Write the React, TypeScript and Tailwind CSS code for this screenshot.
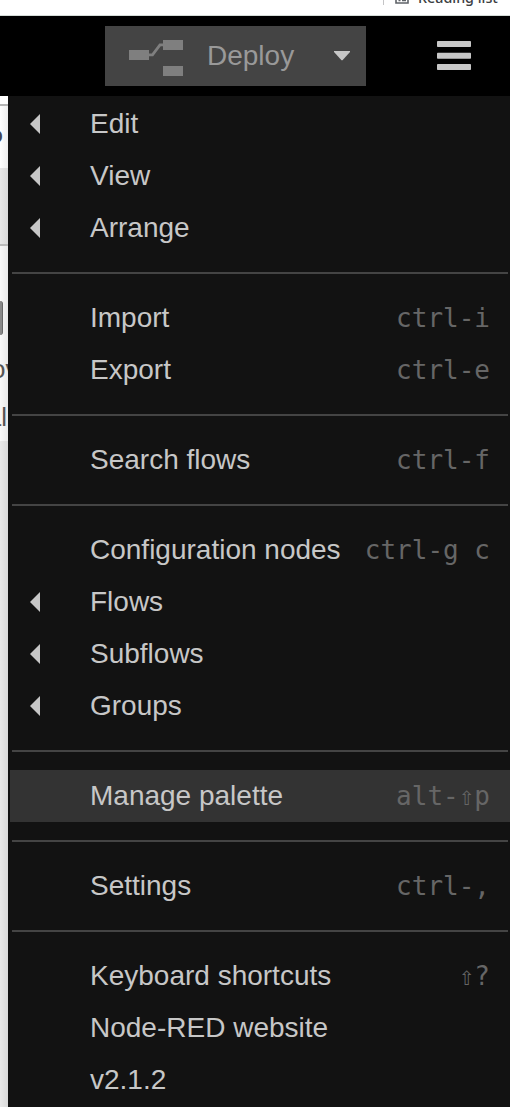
import React from "react";

type Entry = { label: string; keys?: string; sub?: boolean; active?: boolean };

const groups: Entry[][] = [
  [
    { label: "Edit", sub: true },
    { label: "View", sub: true },
    { label: "Arrange", sub: true },
  ],
  [
    { label: "Import", keys: "ctrl-i" },
    { label: "Export", keys: "ctrl-e" },
  ],
  [{ label: "Search flows", keys: "ctrl-f" }],
  [
    { label: "Configuration nodes", keys: "ctrl-g c" },
    { label: "Flows", sub: true },
    { label: "Subflows", sub: true },
    { label: "Groups", sub: true },
  ],
  [{ label: "Manage palette", keys: "alt-⇧p", active: true }],
  [{ label: "Settings", keys: "ctrl-," }],
  [
    { label: "Keyboard shortcuts", keys: "⇧?" },
    { label: "Node-RED website" },
    { label: "v2.1.2" },
  ],
];

function MenuRow({ label, keys, sub, active }: Entry) {
  return (
    <li
      className={`flex h-[52px] shrink-0 items-center pr-5 pl-5 ${active ? "bg-[#333333]" : ""}`}
    >
      <span className="w-[60px] shrink-0">
        {sub && (
          <svg width="10" height="20" viewBox="0 0 10 20" className="block">
            <path d="M10 0V20L0 10Z" fill="#c7c7c7" />
          </svg>
        )}
      </span>
      <span className="grow text-[28px] leading-[40px] whitespace-nowrap text-[#c7c7c7]">{label}</span>
      {keys && (
        <span className="font-['DejaVu_Sans_Mono',monospace] text-[26px] leading-[40px] whitespace-pre text-[#666666]">
          {keys}
        </span>
      )}
    </li>
  );
}

function BrowserBar() {
  return (
    <div className="flex h-4 shrink-0 items-end justify-end overflow-hidden border-b border-[#d5dcd8] bg-white">
      <div className="flex h-[15px] w-[127px] items-start">
        <span className="h-[5px] w-px bg-[#c4c4c6]" />
        <svg width="14" height="4" viewBox="0 0 14 4" className="ml-[11px] block">
          <path d="M1 0V3H13V0M3.500 .5H5.500M7 .5H11" fill="none" stroke="#5f6368" strokeWidth="1.600" />
        </svg>
        <span className="-mt-[13px] ml-[9px] font-['Noto_Sans',sans-serif] text-[14.300px] leading-[21px] font-medium whitespace-nowrap text-[#3c4043]">
          Reading list
        </span>
      </div>
    </div>
  );
}

function Header() {
  return (
    <header className="flex h-20 shrink-0 bg-black pt-[10px] pl-[105px]">
      <button className="flex h-[60px] w-[261px] items-center bg-[#444444] pl-6">
        <svg width="54" height="36" viewBox="0 0 54 36" className="mt-1 block shrink-0">
          <path d="M20 14.800H23.500L31 4.800H34" fill="none" stroke="#7f7f7f" strokeWidth="2.800" />
          <path d="M0 10H20V20H0ZM34 0H54V10H34ZM34 26H54V36H34Z" fill="#7f7f7f" />
        </svg>
        <span className="ml-6 w-[127px] text-left text-[28px] leading-[40px] text-[#999999]">Deploy</span>
        <svg width="16" height="10" viewBox="0 0 16 10" className="block shrink-0">
          <path d="M0 0H16V1L8.500 9.300H7.500L0 1Z" fill="#c7c7c7" />
        </svg>
      </button>
      <svg width="34" height="29" viewBox="0 0 34 29" className="mt-[15px] ml-[71px] block shrink-0">
        <rect y="0" width="34" height="6" rx=".8" fill="#c7c7c7" />
        <rect y="11.700" width="34" height="6" rx=".8" fill="#c7c7c7" />
        <rect y="23" width="34" height="6" rx=".8" fill="#c7c7c7" />
      </svg>
    </header>
  );
}

function Workspace() {
  return (
    <aside className="flex w-2 shrink-0 flex-col overflow-hidden bg-linear-to-r from-[#e9e9e9] to-[#d9d9d9]">
      <div className="h-[10px] shrink-0 border-b-2 border-[#b5b5b5] bg-white" />
      <div className="flex h-[62px] shrink-0 items-center justify-end bg-linear-to-r from-white to-[#eeeeee] pr-[5px] pb-1 text-[24px] font-bold text-[#444455]">
        o
      </div>
      <div className="h-[78px] shrink-0 border-b-2 border-[#bbbbbb] bg-linear-to-r from-[#e8e8e8] to-[#d9d9d9]" />
      <div className="flex h-[195px] shrink-0 flex-col bg-linear-to-r from-[#f8f8f8] to-[#e8e8e8] text-[26px] leading-[48px] whitespace-nowrap text-[#555555]">
        <span className="mt-[55px] h-[34px] w-[3px] shrink-0 rounded-r-[3px] border-r border-[#666666] bg-[#888888]" />
        <span className="mt-[10px] -ml-[9px] h-12 shrink-0">ov</span>
        <span className="flex h-12 shrink-0 justify-end pr-px">al</span>
      </div>
    </aside>
  );
}

export default function App() {
  return (
    <div className="flex h-[1107px] w-[510px] flex-col overflow-hidden bg-white font-['Liberation_Sans',Arial,sans-serif]">
      <BrowserBar />
      <Header />
      <div className="flex min-h-0 grow">
        <Workspace />
        <nav className="flex min-w-0 grow flex-col border-l-2 border-[#111111] bg-[#121212] pt-0.5">
          {groups.map((group, index) => (
            <React.Fragment key={group[0].label}>
              {index > 0 && <hr className="mx-0.5 my-[18px] h-0.5 shrink-0 border-0 bg-[#444444]" />}
              <ul className="flex shrink-0 flex-col">
                {group.map((entry) => (
                  <MenuRow key={entry.label} {...entry} />
                ))}
              </ul>
            </React.Fragment>
          ))}
        </nav>
      </div>
    </div>
  );
}
